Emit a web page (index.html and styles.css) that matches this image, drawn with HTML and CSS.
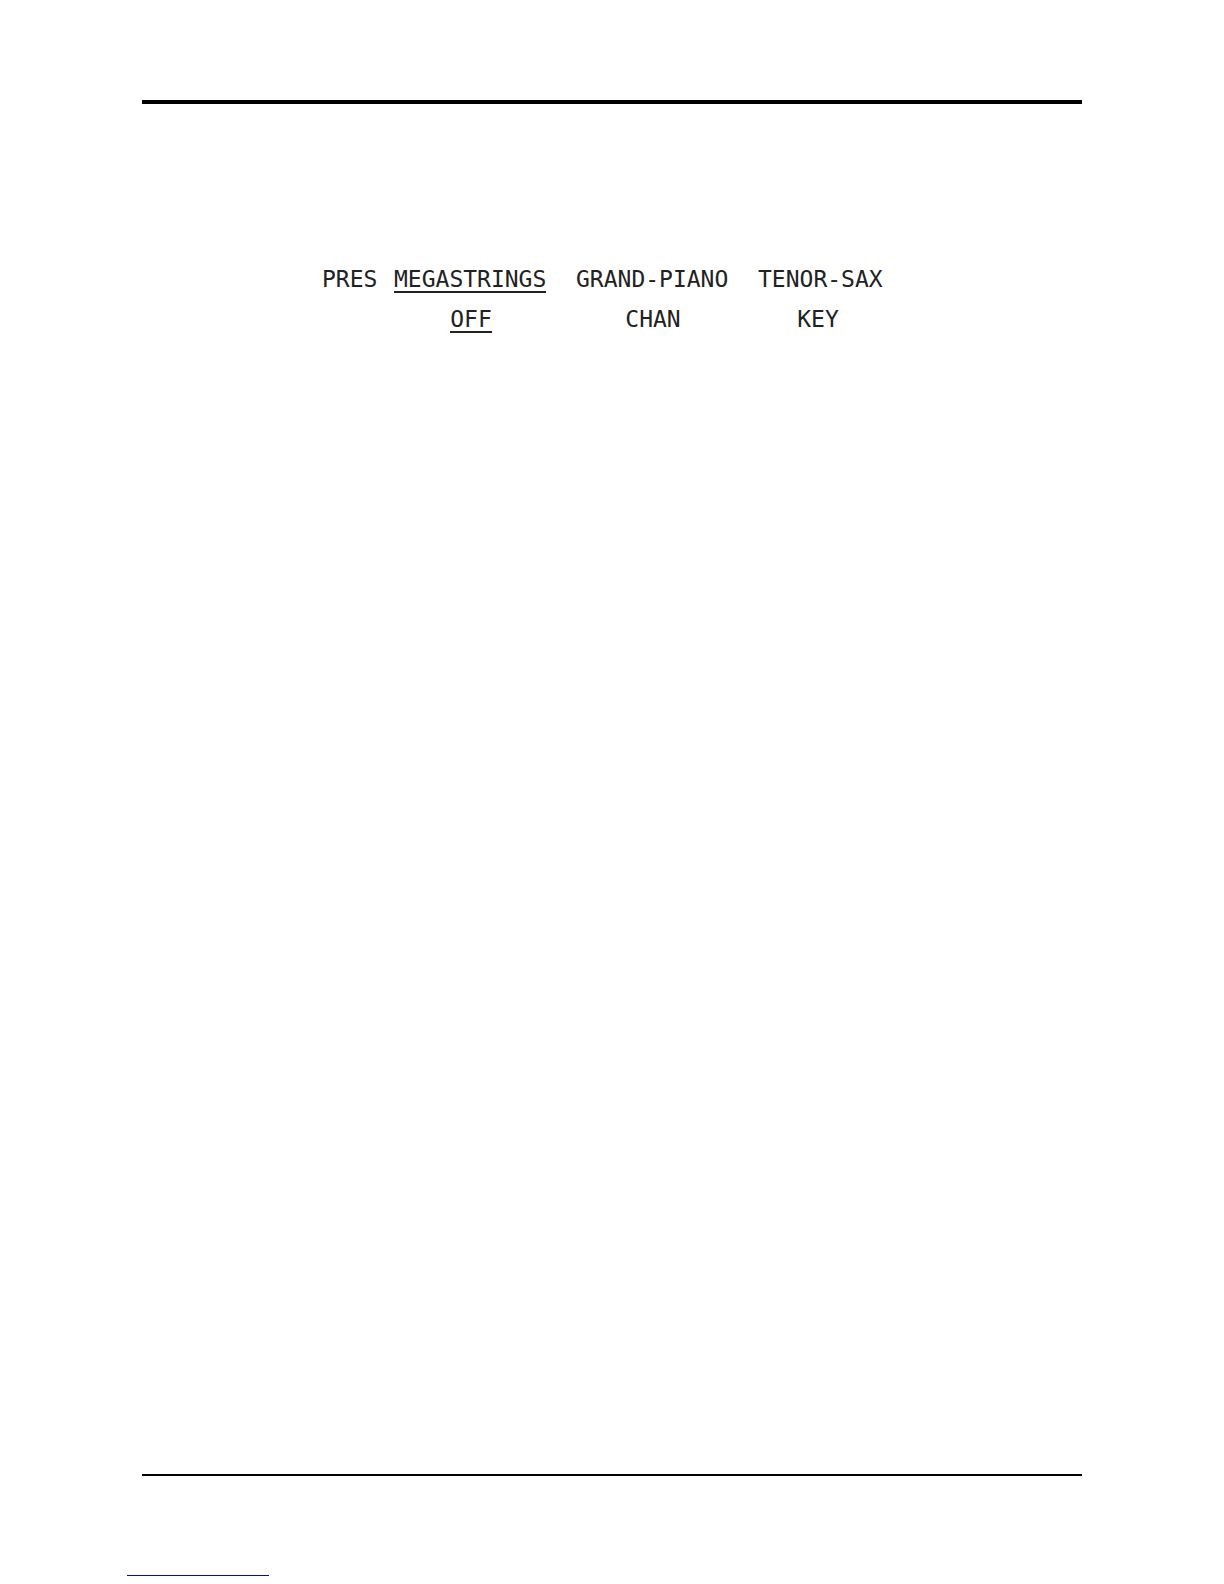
FILE: index.html
```
<!DOCTYPE html>
<html lang="en">

<head>
    <meta charset="UTF-8">
    <meta name="viewport" content="width=device-width, initial-scale=1.0">
    <title>Preset display</title>
    <link rel="stylesheet" href="styles.css">
</head>

<body>
    <main class="page">
        <div class="display">
            <span class="label">PRES</span>
            <div class="presets">
                <span class="name"><u>MEGASTRINGS</u></span>
                <span class="name">GRAND-PIANO</span>
                <span class="name">TENOR-SAX</span>
                <span class="mode"><u>OFF</u></span>
                <span class="mode">CHAN</span>
                <span class="mode">KEY</span>
            </div>
        </div>
    </main>
    <footer>
        <div class="line"></div>
    </footer>
</body>

</html>
```
FILE: styles.css
```
* {
    margin: 0;
    padding: 0;
    box-sizing: border-box;
}
body {
    display: flex;
    flex-direction: column;
    min-height: 100vh;
    padding-top: 100px;
    background-color: white;
}
.page {
    flex: 1;
    margin: 0 142px;
    padding-top: 163px;
    border-top: 4px solid black;
    border-bottom: 2px solid black;
}
.display {
    display: flex;
    gap: 16px;
    padding-left: 180px;
    font-family: "DejaVu Sans Mono", monospace;
    font-size: 23px;
    line-height: 24px;
    color: #222;
    white-space: nowrap;
}
.label {
    width: 56px;
}
.presets {
    display: grid;
    grid-template-columns: 154px 154px 120px;
    grid-auto-rows: 26px;
    gap: 14px 28px;
}
.mode {
    text-align: center;
}
.presets u {
    display: inline-block;
    text-decoration: none;
    border-bottom: 2px solid #222;
}
footer {
    padding: 99px 127px 8px;
}
/* short blue line at the foot of the page */
.line {
    width: 142px;
    border-bottom: 1px solid #0c0c98;
}
```
